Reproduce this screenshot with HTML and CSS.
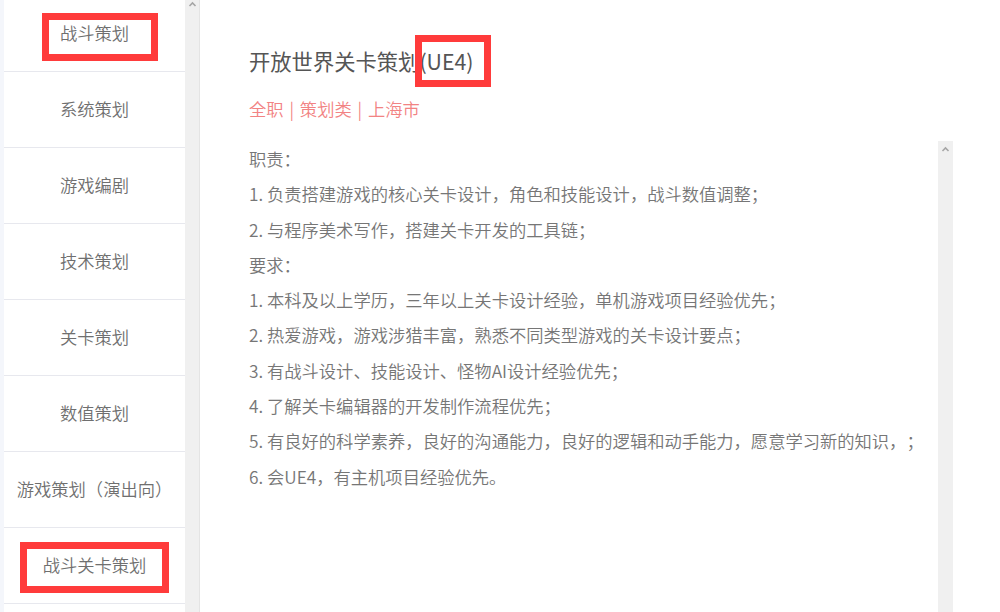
FILE: index.html
```html
<!DOCTYPE html>
<html lang="zh-CN">
<head>
<meta charset="utf-8">
<title>职位详情</title>
<link rel="stylesheet" href="styles.css">
</head>
<body>
<div class="page">
  <aside class="sidebar">
    <div class="strip"></div>
    <div class="list-wrap">
      <ul class="list">
        <li class="item">战斗策划</li>
        <li class="item">系统策划</li>
        <li class="item">游戏编剧</li>
        <li class="item">技术策划</li>
        <li class="item">关卡策划</li>
        <li class="item">数值策划</li>
        <li class="item">游戏策划（演出向）</li>
        <li class="item">战斗关卡策划</li>
        <li class="item"></li>
      </ul>
    </div>
    <div class="vscroll">
      <svg class="arrow" width="15" height="12" viewBox="0 0 15 12"><path d="M4.5 8 L7.5 5 L10.5 8" fill="none" stroke="#a6a6a6" stroke-width="1.6"/></svg>
    </div>
  </aside>
  <main class="main">
    <h1 class="title">开放世界关卡策划(UE4)</h1>
    <p class="meta">全职 | 策划类 | 上海市</p>
    <div class="desc-box">
      <div class="desc">
        <p>职责：</p>
        <p>1. 负责搭建游戏的核心关卡设计，角色和技能设计，战斗数值调整；</p>
        <p>2. 与程序美术写作，搭建关卡开发的工具链；</p>
        <p>要求：</p>
        <p>1. 本科及以上学历，三年以上关卡设计经验，单机游戏项目经验优先；</p>
        <p>2. 热爱游戏，游戏涉猎丰富，熟悉不同类型游戏的关卡设计要点；</p>
        <p>3. 有战斗设计、技能设计、怪物AI设计经验优先；</p>
        <p>4. 了解关卡编辑器的开发制作流程优先；</p>
        <p>5. 有良好的科学素养，良好的沟通能力，良好的逻辑和动手能力，愿意学习新的知识，；</p>
        <p>6. 会UE4，有主机项目经验优先。</p>
      </div>
      <div class="vscroll inner">
        <svg class="arrow" width="15" height="12" viewBox="0 0 15 12"><path d="M4.5 8 L7.5 5 L10.5 8" fill="none" stroke="#a6a6a6" stroke-width="1.6"/></svg>
      </div>
    </div>
  </main>
</div>
<div class="mark mark-1"></div>
<div class="mark mark-2"></div>
<div class="mark mark-3"></div>
</body>
</html>
```

FILE: styles.css
```css
* { box-sizing: border-box; }
html, body {
  margin: 0;
  padding: 0;
  width: 1000px;
  height: 612px;
  overflow: hidden;
  background: #fff;
  font-family: "Noto Sans CJK SC", "Noto Sans", sans-serif;
  text-spacing-trim: space-all;
}
.page {
  display: flex;
  height: 612px;
}
.sidebar {
  display: flex;
  width: 200px;
  flex: none;
  height: 100%;
}
.strip {
  width: 4px;
  background: #f4f6fb;
}
.list-wrap {
  width: 181px;
  overflow: hidden;
  background: #fff;
}
.list {
  list-style: none;
  margin: -4px 0 0 0;
  padding: 0;
}
.item {
  height: 76px;
  border-bottom: 1px solid #e7e8ee;
  display: flex;
  align-items: center;
  justify-content: center;
  font-size: 17.3px;
  font-weight: 350;
  color: #6f6f6f;
  padding-bottom: 3px;
}
.vscroll {
  width: 15px;
  background: #f0f0f0;
  border-right: 1px solid #e4e4e4;
  display: flex;
  flex-direction: column;
  align-items: center;
}
.sidebar .vscroll { margin-top: -2px; }
.arrow { display: block; }
.main {
  flex: 1;
  padding: 45px 47px 0 49px;
  display: flex;
  flex-direction: column;
}
.title {
  margin: 0;
  font-size: 21.3px;
  font-weight: 400;
  line-height: 32px;
  color: #555;
}
.meta {
  margin: 19px 0 0 0;
  font-size: 17.3px;
  font-weight: 350;
  line-height: 26px;
  color: #f28383;
  word-spacing: 2px;
}
.desc-box {
  margin-top: 19px;
  flex: 1;
  display: flex;
}
.desc {
  flex: 1;
  font-size: 17.3px;
  font-weight: 350;
  line-height: 35.3px;
  color: #767676;
}
.desc p { margin: 0; white-space: nowrap; }
.vscroll.inner {
  border-right: none;
  padding-top: 2px;
}
.mark {
  position: absolute;
  border: 7px solid #ff3b3b;
}
.mark-1 { left: 42px; top: 13px; width: 116px; height: 48px; }
.mark-2 { left: 20px; top: 542px; width: 149px; height: 51px; }
.mark-3 { left: 415px; top: 35px; width: 76px; height: 52px; }
```
